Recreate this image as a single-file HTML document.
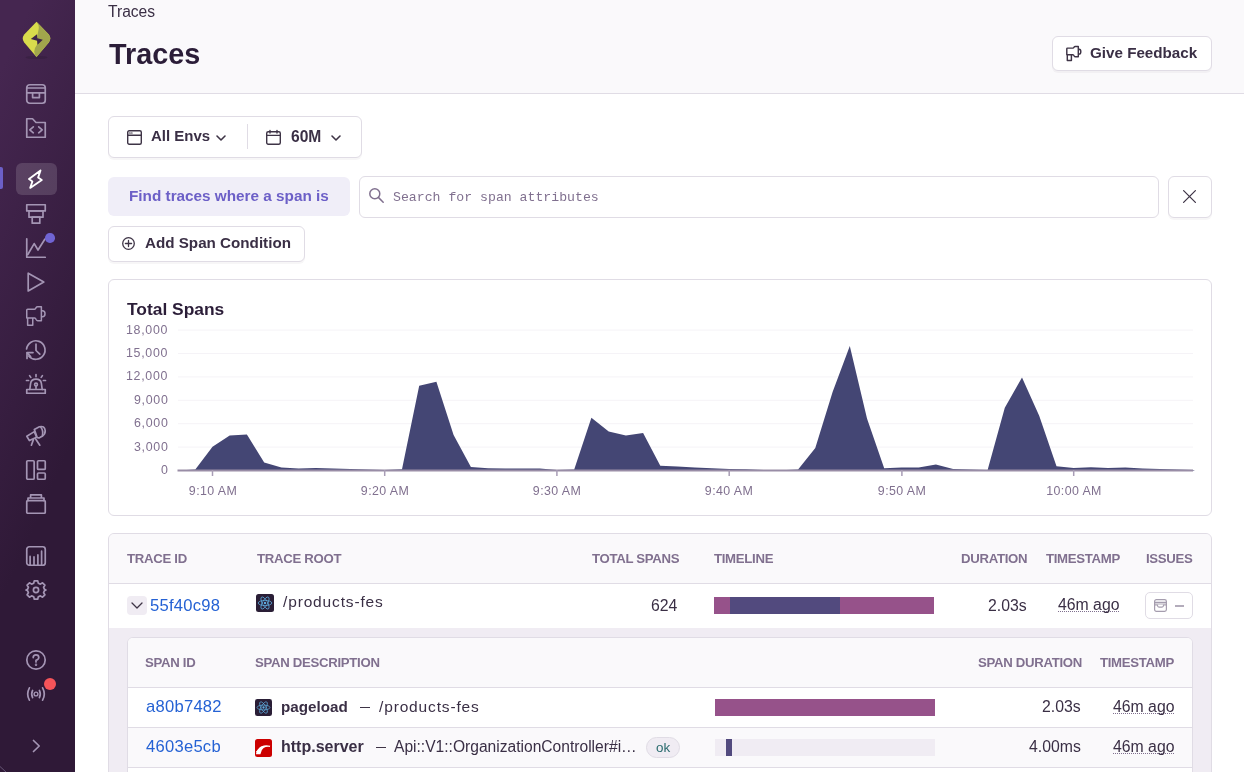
<!DOCTYPE html>
<html><head><meta charset="utf-8">
<style>
*{box-sizing:border-box;margin:0;padding:0}
html,body{width:1244px;height:772px;overflow:hidden;background:#fff;font-family:"Liberation Sans",sans-serif;color:#2B2233}
#sb{position:absolute;left:0;top:0;width:75px;height:772px;background:linear-gradient(294.17deg,#2f1937 35.57%,#452650 92.42%)}
svg{position:absolute;overflow:visible}
.ic{fill:none;stroke:#A495B4;stroke-width:1.7;stroke-linecap:round;stroke-linejoin:round}
.di{fill:none;stroke:#3E3446;stroke-width:1.4;stroke-linecap:round;stroke-linejoin:round}
#hdr{position:absolute;left:75px;top:0;width:1169px;height:94px;background:#FAF9FB;border-bottom:1px solid #E0DCE5}
.box{position:absolute;background:#fff;border:1px solid #E0DCE5;border-radius:6px}
.sh{box-shadow:0 2px 0 rgba(43,34,51,0.04)}
.t{position:absolute;will-change:transform;white-space:nowrap;line-height:1}
.b{font-weight:bold}
.hd{position:absolute;will-change:transform;white-space:nowrap;line-height:1;font-size:13.2px;letter-spacing:-0.3px;font-weight:bold;color:#80708F}
.lnk{color:#2562D4}
.yl{font-size:12.4px;color:#80708F;letter-spacing:0.7px}
.xl{font-size:12.4px;color:#80708F;letter-spacing:0.4px}
.dot{text-decoration:underline dotted #80708F;text-underline-offset:1px;text-decoration-thickness:1px}
</style></head><body>
<div id="sb">
  <!-- logo -->
  <svg style="left:18px;top:18px" width="38" height="44" viewBox="0 0 38 44">
    <ellipse cx="18.5" cy="39.5" rx="11" ry="1.6" fill="#2a1a33" opacity="0.35"/>
    <path d="M18.5 3.7 L30.8 16.6 Q33.8 20.4 30.8 24.4 L18.5 39 L6.2 24.4 Q3.2 20.4 6.2 16.6 Z" fill="#D9DC4C"/>
    <path d="M18.5 3.7 Q21.6 7.5 20.6 11.5 L19.4 17 L19.4 26 Q16.4 30 16.2 33.5 Q16.4 36.8 18.5 39 L30.8 24.4 Q33.8 20.4 30.8 16.6 Z" fill="#A1A64C"/>
    <path d="M12.8 21 L19 16.2 L19.4 20.2 L24.8 21.7 L19.5 26.8 L19.1 22.8 Z" fill="#3E2649"/>
  </svg>
  <!-- issues -->
  <svg style="left:26px;top:84px" width="20" height="20" viewBox="0 0 20 20" class="ic">
    <rect x="0.75" y="0.75" width="18.5" height="18.5" rx="3"/>
    <path d="M0.75 4 H19.25 M0.75 8.9 H19.25 M6.6 8.9 V13.6 H13.4 V8.9"/>
  </svg>
  <!-- projects -->
  <svg style="left:26px;top:118px" width="20" height="20" viewBox="0 0 20 20" class="ic">
    <path d="M0.75 19.25 V0.75 H6.5 L10 4.5 H19.25 V19.25 Z"/>
    <path d="M7.3 8.8 L3.8 11.8 L7.3 14.8 M12.7 8.8 L16.2 11.8 L12.7 14.8"/>
  </svg>
  <!-- active indicator -->
  <div style="position:absolute;left:0;top:167px;width:2.5px;height:22px;background:#6C5FC7;border-radius:0 2px 2px 0"></div>
  <div style="position:absolute;left:16px;top:163px;width:41px;height:32px;background:rgba(255,255,255,0.14);border-radius:6px"></div>
  <svg style="left:26px;top:169px" width="20" height="20" viewBox="0 0 20 20" class="ic" style="stroke:#fff">
    <path d="M14.5 1.5 L3 10.1 L6.4 12.5 L4.2 18.9 L15.8 11.1 L12.1 8.6 Z" stroke="#fff" stroke-width="1.85"/>
  </svg>
  <!-- insights -->
  <svg style="left:26px;top:204px" width="20" height="20" viewBox="0 0 20 20" class="ic">
    <rect x="0.75" y="0.75" width="18.5" height="6.2"/>
    <rect x="3" y="6.95" width="14" height="6.2"/>
    <rect x="6.2" y="13.15" width="7.6" height="6"/>
  </svg>
  <!-- performance -->
  <svg style="left:26px;top:238px" width="20" height="20" viewBox="0 0 20 20" class="ic">
    <path d="M0.75 0.75 V19.25 H19.25"/>
    <path d="M1.8 16.5 L8.2 5.6 L12 12 L18.8 1.2"/>
  </svg>
  <div style="position:absolute;left:45px;top:233px;width:9.5px;height:9.5px;border-radius:50%;background:#7064D3"></div>
  <!-- replays -->
  <svg style="left:26px;top:272px" width="20" height="20" viewBox="0 0 20 20" class="ic">
    <path d="M2.2 1.2 V19 L17.8 10.1 Z"/>
  </svg>
  <!-- feedback megaphone -->
  <svg style="left:26px;top:306px" width="20" height="20" viewBox="0 0 16 16" class="ic">
    <path d="M0.6 3.2 Q0.6 2.5 1.3 2.5 H6.9 Q7.5 2.5 8.1 1.3 Q8.5 0.5 9.2 0.5 H12.3 V11.7 H9.3 Q8.6 11.7 8.1 10.8 Q7.6 9.6 6.9 9.6 H0.6 Z M12.3 3.8 H13.1 Q15.2 3.8 15.2 6.2 Q15.2 8.6 13.1 8.6 H12.3 M1.3 9.6 V15.4 H5.4 V9.6" stroke-width="1.2"/>
  </svg>
  <!-- crons -->
  <svg style="left:26px;top:340px" width="20" height="20" viewBox="0 0 20 20" class="ic">
    <path d="M0.6 9.0 A9.25 9.25 0 1 1 2.9 16.2"/>
    <path d="M7.0 12.6 H1.0 V18.4"/>
    <path d="M1.2 12.8 L4.6 16.6"/>
    <path d="M10 4.2 V10.5 L13.8 14.2"/>
  </svg>
  <!-- alerts siren -->
  <svg style="left:26px;top:374px" width="20" height="20" viewBox="0 0 20 20" class="ic">
    <path d="M0.75 15.5 H19.25 V19.25 H0.75 Z"/>
    <path d="M3.8 15.5 L4.6 9.5 Q5.2 5.2 10 5.2 Q14.8 5.2 15.4 9.5 L16.2 15.5"/>
    <circle cx="10" cy="10.6" r="1.4"/>
    <path d="M10 12 V14.2 M10 0.6 V2.6 M3.6 1.6 L4.8 3.4 M16.4 1.6 L15.2 3.4 M0.5 6.5 H2.6 M17.4 6.5 H19.5"/>
  </svg>
  <!-- discover telescope -->
  <svg style="left:26px;top:426px" width="20" height="20" viewBox="0 0 20 20" class="ic">
    <path d="M0.8 10.2 L8.3 5.6 L10.6 11.2 L3.4 14.6 Z"/>
    <path d="M8.3 3.4 L13.4 0.8 Q18.6 -0.6 19.2 4.6 Q19.4 8.2 16.2 10.2 L13.8 11.6 Q11.8 12.2 10.9 10.9 Z"/>
    <path d="M14.6 1.0 Q17.6 4.2 16.4 10.0"/>
    <path d="M7.4 13.6 L5.4 19.2 M9.5 12.8 L13.8 19.2"/>
  </svg>
  <!-- dashboards -->
  <svg style="left:26px;top:460px" width="20" height="20" viewBox="0 0 20 20" class="ic">
    <rect x="0.75" y="0.75" width="7.4" height="18.5" rx="1"/>
    <rect x="11.5" y="0.75" width="7.75" height="8.7" rx="1"/>
    <rect x="11.5" y="13" width="7.75" height="6.25" rx="1"/>
  </svg>
  <!-- releases -->
  <svg style="left:26px;top:494px" width="20" height="20" viewBox="0 0 20 20" class="ic">
    <rect x="0.75" y="6.6" width="18.5" height="12.65" rx="1"/>
    <path d="M2 6.6 V4 H18 V6.6 M4.6 4 V0.9 H15.4 V4"/>
  </svg>
  <!-- stats -->
  <svg style="left:26px;top:546px" width="20" height="20" viewBox="0 0 20 20" class="ic">
    <rect x="0.75" y="0.75" width="18.5" height="18.5" rx="2.5"/>
    <path d="M4.1 19 V10.4 M8 19 V10.9 M11.9 19 V8.9 M15.6 19 V5.2"/>
  </svg>
  <!-- settings gear -->
  <svg style="left:26px;top:580px" width="20" height="20" viewBox="0 0 20 20" class="ic">
    <path id="gear" d="M8.3 0.8 H11.7 L12.3 3.2 L14.4 4.1 L16.5 2.8 L18.9 5.2 L17.6 7.3 L18.5 9.4 L20 10 L18.5 10.6 L17.6 12.7 L18.9 14.8 L16.5 17.2 L14.4 15.9 L12.3 16.8 L11.7 19.2 H8.3 L7.7 16.8 L5.6 15.9 L3.5 17.2 L1.1 14.8 L2.4 12.7 L1.5 10.6 L0 10 L1.5 9.4 L2.4 7.3 L1.1 5.2 L3.5 2.8 L5.6 4.1 L7.7 3.2 Z"/>
    <circle cx="10" cy="10" r="2.6"/>
  </svg>
  <!-- help -->
  <svg style="left:26px;top:650px" width="20" height="20" viewBox="0 0 20 20" class="ic">
    <circle cx="10" cy="10" r="9.2"/>
    <path d="M7.2 7.6 Q7.2 4.8 10 4.8 Q12.8 4.8 12.8 7.4 Q12.8 9.2 10 10.3 V12"/>
    <circle cx="10" cy="14.8" r="0.4" fill="#A99CB8"/>
  </svg>
  <!-- broadcasts -->
  <svg style="left:26px;top:687px" width="20" height="14" viewBox="0 0 20 14" class="ic">
    <circle cx="10" cy="7" r="1.9" stroke-width="1.4"/>
    <path d="M6.6 3.4 Q4.8 7 6.6 10.6 M13.4 3.4 Q15.2 7 13.4 10.6 M3.4 0.8 Q0 7 3.4 13.2 M16.6 0.8 Q20 7 16.6 13.2"/>
  </svg>
  <div style="position:absolute;left:44px;top:678px;width:12px;height:12px;border-radius:50%;background:#F55459"></div>
  <svg style="left:0;top:760px" width="12" height="12" viewBox="0 0 12 12"><path d="M0 6.5 L6 12" stroke="#7E6F90" stroke-width="1" opacity="0.7" fill="none"/></svg>
  <!-- collapse chevron -->
  <svg style="left:26px;top:736px" width="20" height="20" viewBox="0 0 20 20" class="ic">
    <path d="M7.5 4.5 L13.2 10 L7.5 15.5"/>
  </svg>
</div>

<div id="hdr"></div>
<div class="t" style="left:108px;top:4px;font-size:15.6px;letter-spacing:0px;color:#3A2F45">Traces</div>
<div class="t" style="left:108.5px;top:39.5px;font-size:28.8px;font-weight:bold;color:#2B1D38">Traces</div>
<div class="box sh" style="left:1052px;top:36px;width:160px;height:35px"></div>
<svg style="left:1066px;top:46px" width="16" height="16" viewBox="0 0 16 16" class="di">
  <path d="M0.8 2.8 Q0.8 2.1 1.5 2.1 H6.9 Q7.5 2.1 8.1 1.1 Q8.5 0.4 9.2 0.4 H12.3 V10.7 H9.3 Q8.6 10.7 8.1 9.8 Q7.6 8.7 6.9 8.7 H0.8 Z M12.3 3.3 H13.1 Q14.8 3.3 14.8 5.7 Q14.8 8.1 13.1 8.1 H12.3 M1.3 8.7 V14.4 H5.4 V8.7" stroke-width="1.45"/>
</svg>
<div class="t b" style="left:1090px;top:45px;font-size:15.2px;color:#3A2F45">Give Feedback</div>

<!-- filters -->
<div class="box sh" style="left:108px;top:116px;width:254px;height:42px"></div>
<div style="position:absolute;left:247px;top:124px;width:1px;height:25px;background:#E0DCE5"></div>
<svg style="left:127px;top:130px" width="15" height="15" viewBox="0 0 15 15" class="di">
  <rect x="0.7" y="0.7" width="13.6" height="13.6" rx="1.5"/>
  <path d="M0.7 5.2 H14.3"/>
  <path d="M2.2 3 H6.2" stroke-width="1.1" stroke-dasharray="1 1"/>
</svg>
<div class="t b" style="left:151px;top:127.5px;font-size:15px;color:#3A2F45">All Envs</div>
<svg style="left:215.5px;top:134.5px" width="10" height="6.5" viewBox="0 0 10 6.5" class="di"><path d="M1 1 L5 5 L9 1" stroke-width="1.6"/></svg>
<svg style="left:266px;top:130px" width="15" height="15" viewBox="0 0 15 15" class="di">
  <rect x="0.7" y="1.8" width="13.6" height="12.5" rx="1.5"/>
  <path d="M0.7 5.4 H14.3 M4 0.4 V3 M11 0.4 V3"/>
</svg>
<div class="t b" style="left:290.5px;top:129px;font-size:15.6px;color:#3A2F45">60M</div>
<svg style="left:330.5px;top:134.5px" width="10" height="6.5" viewBox="0 0 10 6.5" class="di"><path d="M1 1 L5 5 L9 1" stroke-width="1.6"/></svg>

<!-- search row -->
<div style="position:absolute;left:108px;top:177px;width:242px;height:39px;background:#F0EEF8;border-radius:6px"></div>
<div class="t b" style="left:129px;top:188px;font-size:15.3px;color:#6C5FC7">Find traces where a span is</div>
<div class="box" style="left:359px;top:176px;width:800px;height:42px"></div>
<svg style="left:369px;top:188px" width="15" height="15" viewBox="0 0 15 15" class="di" style="">
  <circle cx="5.8" cy="5.8" r="5" stroke="#80708F" stroke-width="1.5"/>
  <path d="M9.6 9.6 L14.2 14.2" stroke="#80708F" stroke-width="1.5"/>
</svg>
<div class="t" style="left:393px;top:190.5px;font-size:13.2px;font-family:'Liberation Mono',monospace;color:#80708F">Search for span attributes</div>
<div class="box sh" style="left:1168px;top:176px;width:44px;height:42px"></div>
<svg style="left:1183px;top:190px" width="13" height="13" viewBox="0 0 13 13" class="di"><path d="M0.6 0.6 L12.4 12.4 M12.4 0.6 L0.6 12.4" stroke-width="1.25"/></svg>

<div class="box sh" style="left:108px;top:226px;width:197px;height:36px"></div>
<svg style="left:122px;top:237px" width="13" height="13" viewBox="0 0 13 13" class="di">
  <circle cx="6.5" cy="6.5" r="5.8" stroke-width="1.3"/><path d="M6.5 3.4 V9.6 M3.4 6.5 H9.6" stroke-width="1.3"/>
</svg>
<div class="t b" style="left:145px;top:235px;font-size:15.2px;color:#3A2F45">Add Span Condition</div>

<!-- chart panel -->
<div class="box" style="left:108px;top:279px;width:1104px;height:237px"></div>
<div class="t b" style="left:127px;top:301px;font-size:17.4px;color:#2B1D38">Total Spans</div>
<div id="chart">
<svg style="left:0;top:0" width="1244" height="772" viewBox="0 0 1244 772">
<line x1="178" y1="330.1" x2="1193" y2="330.1" stroke="#F5F3F7" stroke-width="1"/>
<line x1="178" y1="353.5" x2="1193" y2="353.5" stroke="#F5F3F7" stroke-width="1"/>
<line x1="178" y1="376.9" x2="1193" y2="376.9" stroke="#F5F3F7" stroke-width="1"/>
<line x1="178" y1="400.3" x2="1193" y2="400.3" stroke="#F5F3F7" stroke-width="1"/>
<line x1="178" y1="423.7" x2="1193" y2="423.7" stroke="#F5F3F7" stroke-width="1"/>
<line x1="178" y1="447.1" x2="1193" y2="447.1" stroke="#F5F3F7" stroke-width="1"/>
<polygon points="178.1,470.5 178.1,470.6 195.3,469.6 212.5,446.8 229.7,435.4 246.9,434.4 264.2,462.6 281.4,467.5 298.6,468.6 315.8,468.0 333.1,468.5 350.3,469.0 367.5,469.5 384.7,470.0 402.0,469.2 419.2,385.7 436.4,381.7 453.6,435.0 470.9,467.1 488.1,468.2 505.3,468.6 522.5,468.4 539.8,468.4 557.0,470.0 574.2,469.6 591.4,417.8 608.7,431.5 625.9,435.6 643.1,432.9 660.3,465.7 677.5,466.5 694.8,467.4 712.0,468.2 729.2,469.0 746.4,469.3 763.7,470.0 780.9,470.2 798.1,469.6 815.3,448.0 832.6,392.1 849.8,345.9 867.0,418.4 884.2,468.2 901.5,467.5 918.7,467.5 935.9,464.6 953.1,469.0 970.4,469.5 987.6,470.0 1004.8,407.8 1022.0,377.5 1039.2,415.7 1056.5,466.3 1073.7,468.0 1090.9,467.3 1108.1,468.0 1125.4,467.5 1142.6,468.5 1159.8,469.0 1177.0,469.5 1194.3,470.0 1194.3,470.5" fill="#444674"/>
<line x1="177.5" y1="470.6" x2="1193" y2="470.6" stroke="#998DA6" stroke-width="2"/>
<line x1="212.5" y1="470" x2="212.5" y2="476" stroke="#A89DB5" stroke-width="1.5"/>
<line x1="384.7" y1="470" x2="384.7" y2="476" stroke="#A89DB5" stroke-width="1.5"/>
<line x1="556.9" y1="470" x2="556.9" y2="476" stroke="#A89DB5" stroke-width="1.5"/>
<line x1="729.2" y1="470" x2="729.2" y2="476" stroke="#A89DB5" stroke-width="1.5"/>
<line x1="901.9" y1="470" x2="901.9" y2="476" stroke="#A89DB5" stroke-width="1.5"/>
<line x1="1073.7" y1="470" x2="1073.7" y2="476" stroke="#A89DB5" stroke-width="1.5"/>
</svg>
<div class="t yl" style="right:1075.5px;top:324px">18,000</div>
<div class="t yl" style="right:1075.5px;top:347px">15,000</div>
<div class="t yl" style="right:1075.5px;top:370px">12,000</div>
<div class="t yl" style="right:1075.5px;top:394px">9,000</div>
<div class="t yl" style="right:1075.5px;top:417px">6,000</div>
<div class="t yl" style="right:1075.5px;top:441px">3,000</div>
<div class="t yl" style="right:1075.5px;top:464px">0</div>
<div class="t xl" style="left:172.5px;width:80px;text-align:center;top:484.5px">9:10 AM</div>
<div class="t xl" style="left:344.7px;width:80px;text-align:center;top:484.5px">9:20 AM</div>
<div class="t xl" style="left:516.9px;width:80px;text-align:center;top:484.5px">9:30 AM</div>
<div class="t xl" style="left:689.2px;width:80px;text-align:center;top:484.5px">9:40 AM</div>
<div class="t xl" style="left:861.9px;width:80px;text-align:center;top:484.5px">9:50 AM</div>
<div class="t xl" style="left:1033.7px;width:80px;text-align:center;top:484.5px">10:00 AM</div>
</div><!--/chart-->

<!-- table -->
<div style="position:absolute;left:108px;top:533px;width:1104px;height:260px;border:1px solid #E0DCE5;border-radius:6px;background:#F0ECF3;overflow:hidden">
  <div style="position:absolute;left:0;top:0;width:100%;height:50px;background:#FAF9FB;border-bottom:1px solid #E0DCE5"></div>
  <div style="position:absolute;left:0;top:50px;width:100%;height:44px;background:#fff"></div>
  <div style="position:absolute;left:18px;top:103px;width:1066px;height:200px;border:1px solid #E0DCE5;border-radius:6px;background:#fff;overflow:hidden">
    <div style="position:absolute;left:0;top:0;width:100%;height:50px;background:#FAF9FB;border-bottom:1px solid #E0DCE5"></div>
    <div style="position:absolute;left:0;top:90px;width:100%;height:39px;background:#FAF9FB"></div>
    <div style="position:absolute;left:0;top:89px;width:100%;height:1px;background:#E0DCE5"></div>
    <div style="position:absolute;left:0;top:129px;width:100%;height:1px;background:#E0DCE5"></div>
  </div>
</div>
<div class="hd" style="left:127px;top:552px">TRACE ID</div>
<div class="hd" style="left:257px;top:552px">TRACE ROOT</div>
<div class="hd" style="left:592px;top:552px">TOTAL SPANS</div>
<div class="hd" style="left:714px;top:552px">TIMELINE</div>
<div class="hd" style="left:961px;top:552px">DURATION</div>
<div class="hd" style="left:1046px;top:552px">TIMESTAMP</div>
<div class="hd" style="left:1146px;top:552px">ISSUES</div>

<div style="position:absolute;left:127px;top:596px;width:20px;height:19px;background:#F0ECF3;border-radius:4px"></div>
<svg style="left:131px;top:602px" width="12" height="7" viewBox="0 0 12 7" class="di"><path d="M1 1 L6 6 L11 1" stroke-width="1.3"/></svg>
<div class="t lnk" style="left:150px;top:597.5px;font-size:16.6px;letter-spacing:0.25px">55f40c98</div>
<svg style="left:256px;top:594px" width="18" height="18" viewBox="0 0 18 18">
  <rect width="18" height="18" rx="2.5" fill="#2A1E36"/>
  <g fill="none" stroke="#5FAEE0" stroke-width="0.75">
    <ellipse cx="9" cy="9" rx="6.8" ry="2.6"/>
    <ellipse cx="9" cy="9" rx="6.8" ry="2.6" transform="rotate(60 9 9)"/>
    <ellipse cx="9" cy="9" rx="6.8" ry="2.6" transform="rotate(120 9 9)"/>
  </g>
  <circle cx="9" cy="9" r="1.2" fill="#5FAEE0"/>
</svg>
<div class="t" style="left:283px;top:594px;font-size:15.5px;letter-spacing:0.85px;color:#3A2F45">/products-fes</div>
<div class="t" style="left:651px;top:598px;font-size:15.8px;color:#3A2F45">624</div>
<div style="position:absolute;left:714px;top:597px;width:220px;height:17px;background:#96528A"></div>
<div style="position:absolute;left:730px;top:597px;width:110px;height:17px;background:#524A7E"></div>
<div class="t" style="left:988px;top:598px;font-size:15.8px;color:#3A2F45">2.03s</div>
<div class="t dot" style="left:1058px;top:597px;font-size:15.8px;color:#3A2F45">46m ago</div>
<div class="box" style="left:1145px;top:592px;width:48px;height:27px;border-radius:5px"></div>
<svg style="left:1154px;top:599px" width="13" height="13" viewBox="0 0 13 13">
  <g stroke="#A59DAE" stroke-width="1.2" fill="none"><rect x="0.6" y="0.6" width="11.8" height="11.8" rx="1.8"/><path d="M0.6 3.4 H12.4 M0.6 6 H3.4 Q3.6 8.2 5 8.2 H8 Q9.4 8.2 9.6 6 H12.4"/></g>
  <rect x="0.6" y="3.4" width="11.8" height="2.6" fill="#A59DAE" opacity="0.45"/>
</svg>
<div style="position:absolute;left:1175px;top:605px;width:8.5px;height:1.6px;background:#B3ACBB"></div>

<!-- inner table -->
<div class="hd" style="left:145px;top:656px">SPAN ID</div>
<div class="hd" style="left:255px;top:656px">SPAN DESCRIPTION</div>
<div class="hd" style="left:978px;top:656px">SPAN DURATION</div>
<div class="hd" style="left:1100px;top:656px">TIMESTAMP</div>

<div class="t lnk" style="left:146px;top:699px;font-size:16.6px;letter-spacing:0.25px">a80b7482</div>
<svg style="left:255px;top:699px" width="17" height="17" viewBox="0 0 18 18">
  <rect width="18" height="18" rx="2.5" fill="#2A1E36"/>
  <g fill="none" stroke="#5FAEE0" stroke-width="0.75">
    <ellipse cx="9" cy="9" rx="6.8" ry="2.6"/>
    <ellipse cx="9" cy="9" rx="6.8" ry="2.6" transform="rotate(60 9 9)"/>
    <ellipse cx="9" cy="9" rx="6.8" ry="2.6" transform="rotate(120 9 9)"/>
  </g>
  <circle cx="9" cy="9" r="1.2" fill="#5FAEE0"/>
</svg>
<div class="t b" style="left:281px;top:698.5px;font-size:15.2px;color:#3A2F45">pageload</div>
<div style="position:absolute;left:359.5px;top:707px;width:10.5px;height:1.4px;background:#3E3446"></div>
<div class="t" style="left:379px;top:698.5px;font-size:15.5px;letter-spacing:0.85px;color:#3A2F45">/products-fes</div>
<div style="position:absolute;left:715px;top:699px;width:220px;height:17px;background:#96528A"></div>
<div class="t" style="left:1042px;top:698.5px;font-size:15.8px;color:#3A2F45">2.03s</div>
<div class="t dot" style="left:1113px;top:698.5px;font-size:15.8px;color:#3A2F45">46m ago</div>

<div class="t lnk" style="left:146px;top:739px;font-size:16.6px;letter-spacing:0.25px">4603e5cb</div>
<svg style="left:255px;top:739px" width="17" height="18" viewBox="0 0 17 18">
  <rect width="17" height="18" rx="2.5" fill="#CC0000"/>
  <path d="M1.0 15.2 Q1.6 9.6 6.6 7.2 Q10.6 5.4 15.2 6.8 L14.8 7.9 Q11.2 7.4 8.6 9.0 Q6.0 10.8 5.4 15.2 Z" fill="#fff"/><path d="M1.2 12.6 L3.2 11.6 M4.6 9.0 L6.4 7.8" stroke="#fff" stroke-width="1"/>
</svg>
<div class="t b" style="left:281px;top:738.5px;font-size:16px;color:#3A2F45">http.server</div>
<div style="position:absolute;left:375.5px;top:747px;width:10.5px;height:1.4px;background:#3E3446"></div>
<div class="t" style="left:394px;top:738.5px;font-size:15.6px;color:#3A2F45">Api::V1::OrganizationController#i…</div>
<div style="position:absolute;left:646px;top:737px;width:34px;height:21px;border-radius:11px;background:#F0ECF3;border:1px solid #E0DCE5"></div>
<div class="t" style="left:656px;top:740.5px;font-size:13.4px;color:#2A6B6E">ok</div>
<div style="position:absolute;left:715px;top:739px;width:220px;height:17px;background:#F0ECF3"></div>
<div style="position:absolute;left:726px;top:739px;width:6px;height:17px;background:#524A7E"></div>
<div class="t" style="left:1029px;top:738.5px;font-size:15.8px;color:#3A2F45">4.00ms</div>
<div class="t dot" style="left:1113px;top:738.5px;font-size:15.8px;color:#3A2F45">46m ago</div>

</body></html>
